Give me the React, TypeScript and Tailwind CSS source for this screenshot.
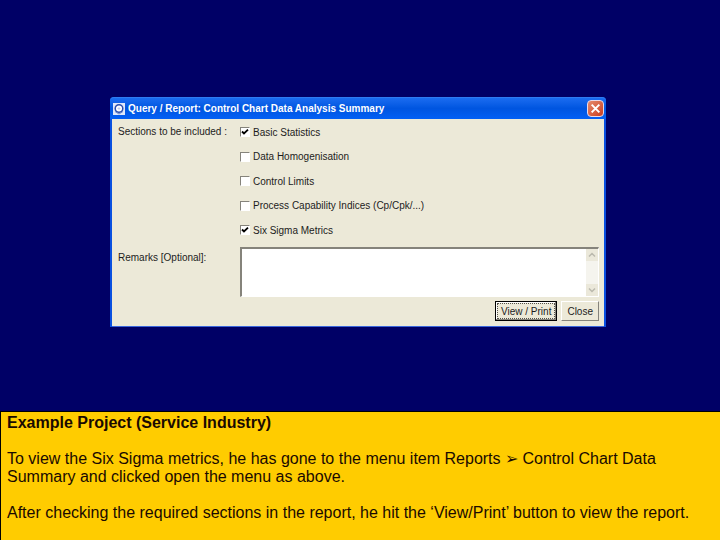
import { useState } from 'react';

const sections: { id: string; label: string; included: boolean }[] = [
  { id: 'basic', label: 'Basic Statistics', included: true },
  { id: 'homogenisation', label: 'Data Homogenisation', included: false },
  { id: 'limits', label: 'Control Limits', included: false },
  {
    id: 'capability',
    label: 'Process Capability Indices (Cp/Cpk/...)',
    included: false,
  },
  { id: 'sigma', label: 'Six Sigma Metrics', included: true },
];

function AppIcon() {
  return (
    <svg viewBox="0 0 12 12" className="size-3" aria-hidden="true">
      <rect width="12" height="12" fill="#dfe8fa" />
      <circle cx="6" cy="5.5" r="3.8" fill="#fff" stroke="#2b4fae" strokeWidth="1.5" />
      <path d="M2 8.5 6 11l4-2.5" fill="none" stroke="#6d88cc" />
      <path d="M4.5 5.5h3M6 4v3" stroke="#b9c8ec" strokeWidth=".8" />
    </svg>
  );
}

function TitleBar() {
  return (
    <header className="flex h-[22px] items-center gap-[3px] rounded-t-sm border-t border-[#2f7cf0] bg-linear-to-b from-[#1a6cf0] via-[#0055e0] to-[#0360f5] pr-[2px] pl-[3px]">
      <AppIcon />
      <h1 className="flex-1 truncate font-['Liberation_Sans',sans-serif] text-[10px] font-bold text-white">
        Query / Report: Control Chart Data Analysis Summary
      </h1>
      <button
        type="button"
        aria-label="Close window"
        className="grid size-[17px] place-items-center rounded-sm border border-[#e8d9e8] bg-linear-to-br from-[#e58a6c] to-[#c93a1c]"
      >
        <svg viewBox="0 0 10 10" className="size-[11px]" aria-hidden="true">
          <path d="m1.5 1.5 7 7m0-7-7 7" stroke="#fff" strokeWidth="1.8" />
        </svg>
      </button>
    </header>
  );
}

function SectionOption({
  label,
  included,
}: {
  label: string;
  included: boolean;
}) {
  const [checked, setChecked] = useState(included);
  return (
    <label className="flex h-[14px] items-center gap-[3px]">
      <span className="grid size-[10px] place-items-center">
        <input
          type="checkbox"
          checked={checked}
          onChange={(event) => setChecked(event.target.checked)}
          className="col-start-1 row-start-1 size-[10px] appearance-none border border-t-[#85837b] border-r-white border-b-white border-l-[#85837b] bg-white"
        />
        {checked && (
          <svg
            viewBox="0 0 8 8"
            className="pointer-events-none col-start-1 row-start-1 size-2"
            aria-hidden="true"
          >
            <path d="m1 3.5 2 2L7 1.7" fill="none" stroke="#000" strokeWidth="1.8" />
          </svg>
        )}
      </span>
      {label}
    </label>
  );
}

function ScrollBar() {
  return (
    <div
      className="flex w-3 flex-col justify-between bg-[#f5f4ee]"
      aria-hidden="true"
    >
      <svg viewBox="0 0 12 12" className="size-3">
        <rect width="12" height="12" fill="#ebe8da" />
        <path d="m3 7.5 3-3 3 3" fill="none" stroke="#bbb9ae" strokeWidth="1.5" />
      </svg>
      <svg viewBox="0 0 12 12" className="size-3">
        <rect width="12" height="12" fill="#ebe8da" />
        <path d="m3 4.5 3 3 3-3" fill="none" stroke="#bbb9ae" strokeWidth="1.5" />
      </svg>
    </div>
  );
}

function ReportDialog() {
  return (
    <div
      role="dialog"
      aria-label="Control Chart Data Analysis Summary"
      className="w-full max-w-[496px] rounded-t-sm bg-[#0a50e0]"
    >
      <TitleBar />
      <form
        className="mx-[2px] flex flex-col border-b border-[#3a66dc] bg-[#ece9d8] pt-[6px] pr-[5px] pb-[5px] pl-[6px] font-['Liberation_Sans',sans-serif] text-[10px] text-[#1c1c1c]"
        onSubmit={(event) => event.preventDefault()}
      >
        <fieldset className="flex">
          <legend className="float-left h-[14px] w-[122px] leading-[14px]">
            Sections to be included :
          </legend>
          <div className="flex h-[112px] flex-col justify-between">
            {sections.map(({ id, label, included }) => (
              <SectionOption key={id} label={label} included={included} />
            ))}
          </div>
        </fieldset>
        <div className="mt-[10px] flex">
          <label htmlFor="remarks" className="w-[122px] pt-[3px]">
            Remarks [Optional]:
          </label>
          <div className="flex h-[50px] flex-1 border-t-2 border-r border-b border-l-2 border-t-[#85837b] border-r-white border-b-white border-l-[#85837b] bg-white">
            <textarea
              id="remarks"
              className="min-w-0 flex-1 resize-none outline-none"
            />
            <ScrollBar />
          </div>
        </div>
        <div className="mt-1 flex justify-end gap-1">
          <button
            type="submit"
            className="h-5 border border-black bg-[#ece9d8] p-px shadow-[inset_-1px_-1px_0_#85837b,inset_1px_1px_0_#fff]"
          >
            <span className="flex h-4 items-center border border-dotted border-[#55534c] px-[3px]">
              View / Print
            </span>
          </button>
          <button
            type="button"
            className="h-5 border border-t-white border-r-[#85837b] border-b-[#85837b] border-l-white bg-[#ece9d8] px-[5px]"
          >
            Close
          </button>
        </div>
      </form>
    </div>
  );
}

export default function App() {
  return (
    <main className="flex min-h-screen flex-col bg-[#000066]">
      <section className="flex flex-1 items-start justify-center pt-[97px] pr-1 pb-4">
        <ReportDialog />
      </section>
      <section className="flex min-h-[129px] flex-col gap-[18px] border-t border-l border-black bg-[#ffcc00] px-[6px] pt-[2px] pb-4 font-['Liberation_Sans',sans-serif] text-[16px] leading-[18px] text-[#1a0a00]">
        <h2 className="font-bold">Example Project (Service Industry)</h2>
        <p>
          To view the Six Sigma metrics, he has gone to the menu item Reports ➢
          Control Chart Data Summary and clicked open the menu as above.
        </p>
        <p>
          After checking the required sections in the report, he hit the
          ‘View/Print’ button to view the report.
        </p>
      </section>
    </main>
  );
}
